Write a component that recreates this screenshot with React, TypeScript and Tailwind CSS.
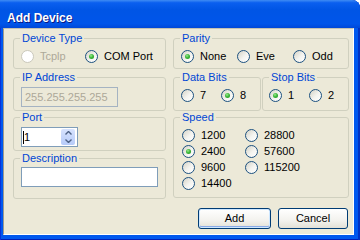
import type { ReactNode } from 'react';

const ui = "font-['Liberation_Sans',Arial,sans-serif] text-[11px]";

interface RadioProps {
  label: string;
  checked?: boolean;
  disabled?: boolean;
  className?: string;
}

function Radio({ label, checked, disabled, className = '' }: RadioProps) {
  return (
    <div className={`flex h-[13px] items-center ${className}`}>
      <span
        className={
          disabled
            ? 'flex h-[13px] w-[13px] shrink-0 items-center justify-center rounded-full border border-[#CAC8BB] bg-white'
            : 'flex h-[13px] w-[13px] shrink-0 items-center justify-center rounded-full border border-[#1C5180] bg-[linear-gradient(135deg,#D4D2C6_0%,#F4F4F0_55%,#FFFFFF_100%)]'
        }
      >
        {checked && (
          <span className="h-[5px] w-[5px] rounded-full bg-[radial-gradient(circle_at_40%_35%,#9BEA8F_0%,#3DB83A_45%,#1E8F1E_100%)]" />
        )}
      </span>
      <span
        className={
          disabled
            ? 'ml-[6px] leading-[13px] text-[#ACA899]'
            : 'ml-[6px] leading-[13px] text-black'
        }
      >
        {label}
      </span>
    </div>
  );
}

interface GroupProps {
  title: string;
  className?: string;
  children: ReactNode;
}

function Group({ title, className = '', children }: GroupProps) {
  return (
    <fieldset className={`min-w-0 rounded-[3px] border border-[#D0D0BF] px-[6px] ${className}`}>
      <legend className="px-[2px] leading-[12px] text-[#0046D5]">{title}</legend>
      {children}
    </fieldset>
  );
}

function Button({ label, primary }: { label: string; primary?: boolean }) {
  return (
    <div
      className={
        primary
          ? 'flex h-[21px] w-[73px] items-center justify-center rounded-[3px] border border-[#003C74] bg-[linear-gradient(to_bottom,#FFFFFF_0%,#F3F2EE_60%,#E3E0D6_100%)] text-black shadow-[inset_0_0_0_1px_#CEE7FF,inset_0_-1px_0_1px_#8AAAE7]'
          : 'flex h-[21px] w-[70px] items-center justify-center rounded-[3px] border border-[#003C74] bg-[linear-gradient(to_bottom,#FFFFFF_0%,#F3F2EE_60%,#E3E0D6_100%)] text-black'
      }
    >
      {label}
    </div>
  );
}

export default function App() {
  return (
    <div className={`h-[240px] w-[360px] bg-white ${ui}`}>
      <div className="flex h-full flex-col overflow-hidden rounded-tr-[8px] bg-[#0058EE] shadow-[inset_1px_0_0_#0831D9,inset_-2px_0_0_#0032C4,inset_0_-1px_0_#0020B8]">
        <div className="h-[28px] shrink-0 bg-[linear-gradient(to_bottom,#3F8CF3_0%,#0A5FEF_10%,#0055E5_35%,#0055EA_85%,#0048D8_100%)] pl-[7px] pt-[10px]">
          <span className="text-[12px] font-bold leading-[13px] text-white [text-shadow:1px_1px_0_#0A1883]">
            Add Device
          </span>
        </div>

        <div className="mb-[5px] ml-[3px] mr-[6px] flex flex-1 flex-col border border-b-white border-l-[#9D9A8C] border-r-white border-t-[#C5C2B2] bg-[#ECE9D8] pl-[9px] pr-[4px] pt-[3px]">
          <div className="grid grid-cols-[153px_176px] gap-x-[7px]">
            <div className="flex flex-col">
              <Group title="Device Type" className="h-[37px]">
                <div className="flex pl-[1px] pt-[6px]">
                  <Radio label="Tcplp" disabled className="w-[64px]" />
                  <Radio label="COM Port" checked />
                </div>
              </Group>

              <Group title="IP Address" className="mt-[2px] h-[40px]">
                <div className="pl-[1px] pt-[4px]">
                  <div className="flex h-[20px] w-[97px] items-center border border-[#A5B3C2] bg-[#ECE9D8] pl-[3px] leading-[13px] text-[#ACA899]">
                    255.255.255.255
                  </div>
                </div>
              </Group>

              <Group title="Port" className="h-[40px]">
                <div className="pl-[1px] pt-[4px]">
                  <div className="flex h-[20px] w-[57px] border border-[#7F9DB9] bg-white">
                    <div className="flex flex-1 items-center pl-[1px] leading-[13px] text-black">
                      <span className="mr-[0px] h-[13px] w-[1px] bg-black" />
                      1
                    </div>
                    <div className="my-[1px] mr-[2px] flex w-[14px] flex-col overflow-hidden rounded-[2px] bg-[linear-gradient(to_bottom,#D7E3FE,#B6CBF9)]">
                      <div className="flex flex-1 items-center justify-center">
                        <svg width="7" height="4" viewBox="0 0 7 4">
                          <path d="M0.5 3.5 L3.5 0.5 L6.5 3.5" fill="none" stroke="#4D6185" strokeWidth="1.4" />
                        </svg>
                      </div>
                      <div className="flex flex-1 items-center justify-center">
                        <svg width="7" height="4" viewBox="0 0 7 4">
                          <path d="M0.5 0.5 L3.5 3.5 L6.5 0.5" fill="none" stroke="#4D6185" strokeWidth="1.4" />
                        </svg>
                      </div>
                    </div>
                  </div>
                </div>
              </Group>

              <Group title="Description" className="mt-[1px] h-[47px]">
                <div className="pl-[1px] pt-[3px]">
                  <div className="h-[20px] w-[137px] border border-[#7F9DB9] bg-white" />
                </div>
              </Group>
            </div>

            <div className="flex flex-col">
              <Group title="Parity" className="h-[37px]">
                <div className="flex pl-[1px] pt-[6px]">
                  <Radio label="None" checked className="w-[56px]" />
                  <Radio label="Eve" className="w-[56px]" />
                  <Radio label="Odd" />
                </div>
              </Group>

              <div className="mt-[2px] flex gap-[1px]">
                <Group title="Data Bits" className="h-[40px] w-[88px]">
                  <div className="flex pl-[1px] pt-[6px]">
                    <Radio label="7" className="w-[40px]" />
                    <Radio label="8" checked />
                  </div>
                </Group>
                <Group title="Stop Bits" className="h-[40px] flex-1">
                  <div className="flex pt-[6px]">
                    <Radio label="1" checked className="w-[40px]" />
                    <Radio label="2" />
                  </div>
                </Group>
              </div>

              <Group title="Speed" className="h-[87px]">
                <div className="grid grid-cols-[63px_auto] gap-y-[3px] pl-[2px] pt-[6px]">
                  <Radio label="1200" />
                  <Radio label="28800" />
                  <Radio label="2400" checked />
                  <Radio label="57600" />
                  <Radio label="9600" />
                  <Radio label="115200" />
                  <Radio label="14400" />
                </div>
              </Group>
            </div>
          </div>

          <div className="mr-[1px] mt-[9px] flex justify-end gap-[7px]">
            <Button label="Add" primary />
            <Button label="Cancel" />
          </div>
        </div>
      </div>
    </div>
  );
}
